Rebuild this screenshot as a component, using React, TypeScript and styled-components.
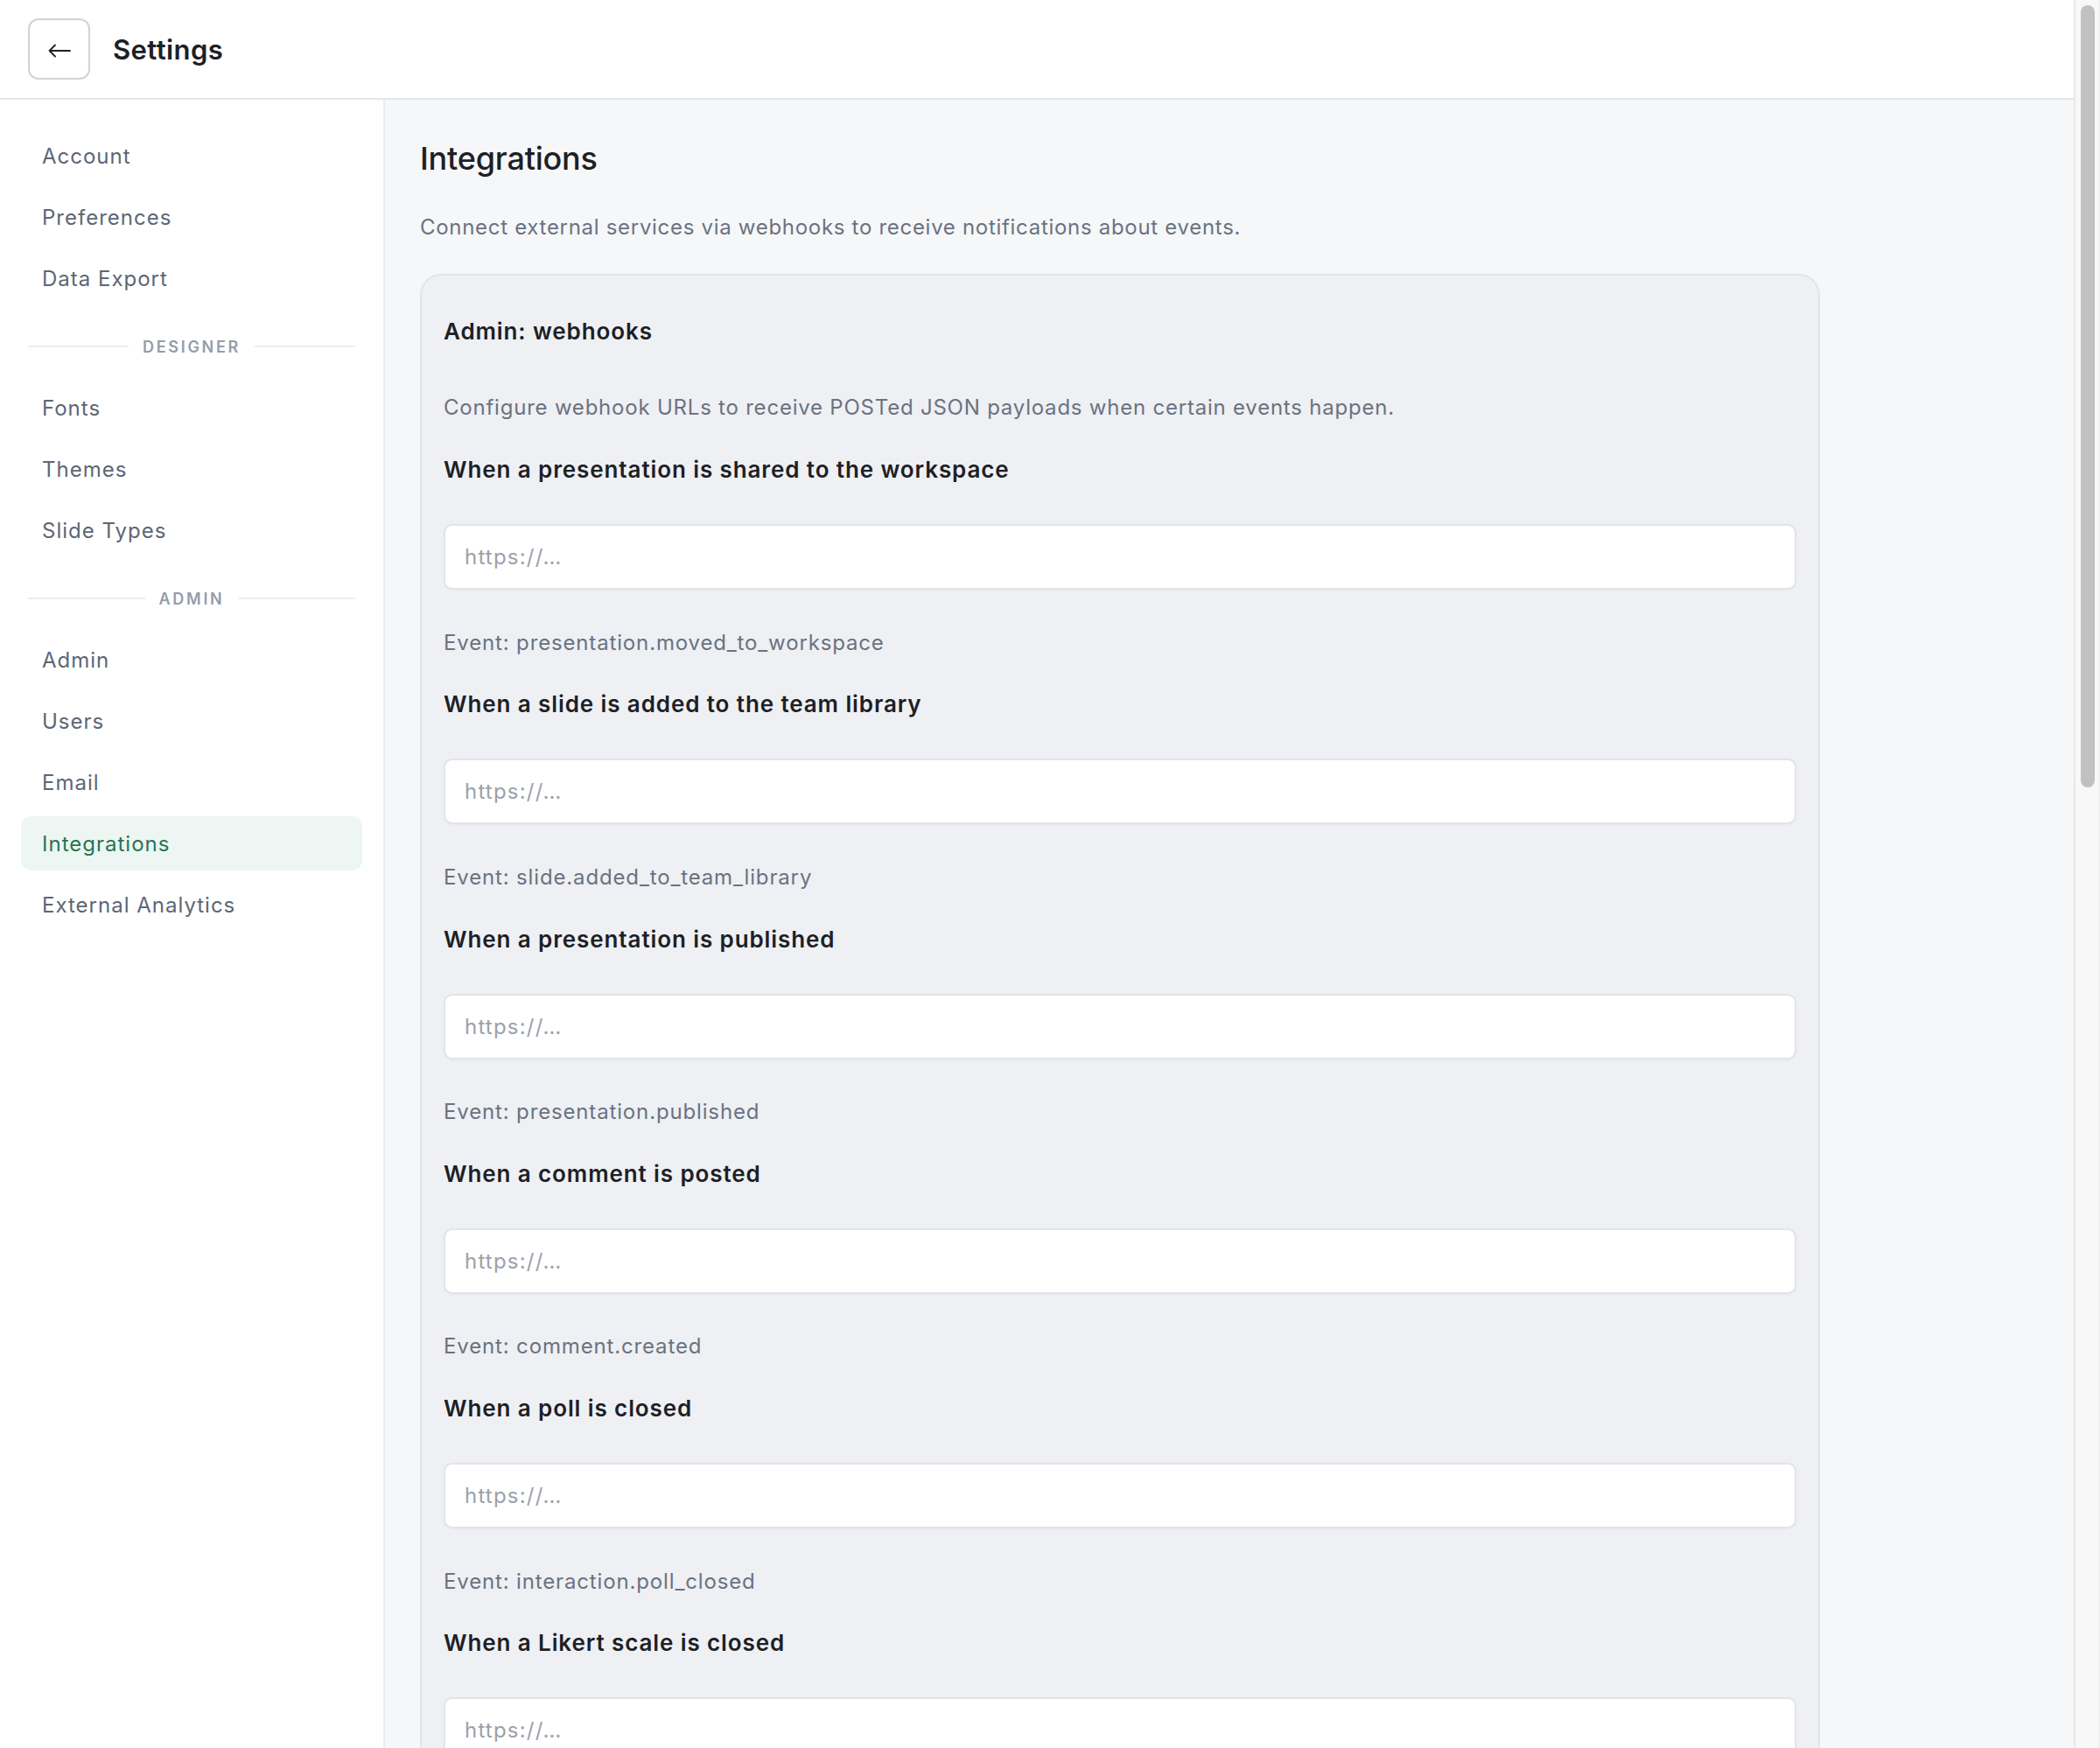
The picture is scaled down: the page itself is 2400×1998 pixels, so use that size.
import React from "react";
import styled, { createGlobalStyle } from "styled-components";

const GlobalStyle = createGlobalStyle`
  body {
    margin: 0;
    font-family: Inter, "Noto Sans", "Liberation Sans", sans-serif;
    background: #f6f7f9;
    color: #1d2025;
    -webkit-font-smoothing: antialiased;
  }
  * {
    box-sizing: border-box;
  }
`;

const Page = styled.div`
  display: flex;
  flex-direction: column;
  min-height: 100vh;
  margin-right: 30px;
`;

const ScrollRail = styled.div`
  position: fixed;
  top: 0;
  right: 0;
  width: 30px;
  height: 100vh;
  background: #f8f8f8;
  border-left: 2px solid #e8e8e8;
  border-right: 2px solid #efefef;
  padding: 6px 4px 0 6px;
`;

const ScrollThumb = styled.div`
  width: 16px;
  height: 894px;
  border-radius: 8px;
  background: #c1c1c1;
`;

const Header = styled.header`
  display: flex;
  align-items: center;
  gap: 26px;
  height: 114px;
  padding: 0 32px;
  background: #ffffff;
  border-bottom: 2px solid #e4e6eb;
`;

const BackButton = styled.button`
  display: flex;
  align-items: center;
  justify-content: center;
  width: 71px;
  height: 70px;
  padding: 4px 0 0;
  background: #ffffff;
  border: 2px solid #cfd3db;
  border-radius: 12px;
  color: #1d2025;
  cursor: pointer;
`;

const HeaderTitle = styled.h1`
  margin: 0;
  font-size: 31px;
  font-weight: 600;
  color: #1d2025;
  letter-spacing: 0.4px;
`;

const Body = styled.div`
  display: flex;
  flex: 1;
  align-items: stretch;
`;

const Sidebar = styled.nav`
  display: flex;
  flex-direction: column;
  gap: 8px;
  width: 440px;
  flex-shrink: 0;
  padding: 33px 24px;
  background: #ffffff;
  border-right: 2px solid #eaecf0;
`;

const NavItem = styled.a<{ $active?: boolean }>`
  display: flex;
  align-items: center;
  height: 62px;
  padding: 0 24px;
  border-radius: 12px;
  font-size: 24px;
  letter-spacing: 1px;
  color: ${(p) => (p.$active ? "#267552" : "#5d6675")};
  background: ${(p) => (p.$active ? "#edf6f2" : "transparent")};
  text-decoration: none;
  cursor: pointer;
`;

const SectionDivider = styled.div`
  display: flex;
  align-items: center;
  gap: 16px;
  margin: 28px 8px 20px;
  height: 22px;
  font-size: 18px;
  font-weight: 600;
  letter-spacing: 0.15em;
  color: #959cab;
  text-transform: uppercase;

  &::before,
  &::after {
    content: "";
    flex: 1;
    height: 2px;
    background: #eceef2;
  }
`;

const Main = styled.main`
  flex: 1;
  padding: 45px 40px 80px;
  background: #f6f7f9;
`;

const PageTitle = styled.h2`
  margin: 0;
  font-size: 36px;
  line-height: 44px;
  font-weight: 500;
  color: #1d2025;
  letter-spacing: -0.2px;
`;

const PageSubtitle = styled.p`
  margin: 40px 0 36px;
  font-size: 24px;
  line-height: 34px;
  letter-spacing: 0.7px;
  color: #6b7280;
`;

const Card = styled.section`
  max-width: 1600px;
  padding: 46px 25px 60px;
  background: #eef0f4;
  border: 2px solid #e2e4e9;
  border-radius: 24px;
`;

const CardTitle = styled.h3`
  margin: 0;
  font-size: 26px;
  line-height: 36px;
  font-weight: 600;
  letter-spacing: 0.9px;
  color: #1d2025;
`;

const CardDescription = styled.p`
  margin: 52px 0 36px;
  font-size: 24px;
  line-height: 34px;
  letter-spacing: 0.78px;
  color: #6b7280;
`;

const Hooks = styled.div`
  display: flex;
  flex-direction: column;
  gap: 35.8px;
`;

const Field = styled.div`
  display: flex;
  flex-direction: column;
`;

const FieldLabel = styled.label`
  margin: 0 0 44px;
  font-size: 26px;
  line-height: 36px;
  font-weight: 600;
  letter-spacing: 0.9px;
  color: #1d2025;
`;

const UrlInput = styled.input`
  width: 100%;
  height: 75px;
  padding: 0 22px;
  background: #ffffff;
  border: 2px solid #e2e4e9;
  border-radius: 10px;
  box-shadow: 0 1px 3px rgba(16, 24, 40, 0.04);
  font-family: Inter, "Noto Sans", sans-serif;
  font-size: 24px;
  letter-spacing: 1.2px;
  color: #1d2025;
  outline: none;

  &::placeholder {
    color: #9ba1ab;
  }
`;

const EventHint = styled.p`
  margin: 43.5px 0 0;
  font-size: 24px;
  line-height: 34px;
  letter-spacing: 0.85px;
  color: #6b7280;
`;

type NavEntry = { label: string; active?: boolean } | { section: string };

const nav: NavEntry[] = [
  { label: "Account" },
  { label: "Preferences" },
  { label: "Data Export" },
  { section: "Designer" },
  { label: "Fonts" },
  { label: "Themes" },
  { label: "Slide Types" },
  { section: "Admin" },
  { label: "Admin" },
  { label: "Users" },
  { label: "Email" },
  { label: "Integrations", active: true },
  { label: "External Analytics" },
];

const hooks = [
  { label: "When a presentation is shared to the workspace", event: "presentation.moved_to_workspace" },
  { label: "When a slide is added to the team library", event: "slide.added_to_team_library" },
  { label: "When a presentation is published", event: "presentation.published" },
  { label: "When a comment is posted", event: "comment.created" },
  { label: "When a poll is closed", event: "interaction.poll_closed" },
  { label: "When a Likert scale is closed", event: "interaction.likert_closed" },
  { label: "When a quiz is completed", event: "interaction.quiz_completed" },
  { label: "When a question is submitted", event: "interaction.question_submitted" },
  { label: "When a user joins the workspace", event: "user.joined_workspace" },
  { label: "When a user is removed from the workspace", event: "user.removed_from_workspace" },
  { label: "When a theme is updated", event: "theme.updated" },
  { label: "When a data export is ready", event: "export.completed" },
];

const BackArrow = () => (
  <svg width="26" height="16" viewBox="0 0 26 16" fill="none" aria-hidden="true">
    <path d="M25 8H1.5M8 1.5L1.5 8L8 14.5" stroke="#1d2025" strokeWidth="1.8" strokeLinecap="round" strokeLinejoin="round" />
  </svg>
);

export default function App() {
  return (
    <>
      <GlobalStyle />
      <Page>
        <Header>
          <BackButton aria-label="Back">
            <BackArrow />
          </BackButton>
          <HeaderTitle>Settings</HeaderTitle>
        </Header>
        <Body>
          <Sidebar>
            {nav.map((item, i) =>
              "section" in item ? (
                <SectionDivider key={i}>{item.section}</SectionDivider>
              ) : (
                <NavItem key={i} $active={item.active}>
                  {item.label}
                </NavItem>
              )
            )}
          </Sidebar>
          <Main>
            <PageTitle>Integrations</PageTitle>
            <PageSubtitle>
              Connect external services via webhooks to receive notifications about events.
            </PageSubtitle>
            <Card>
              <CardTitle>Admin: webhooks</CardTitle>
              <CardDescription>
                Configure webhook URLs to receive POSTed JSON payloads when certain events happen.
              </CardDescription>
              <Hooks>
                {hooks.map((h) => (
                  <Field key={h.event}>
                    <FieldLabel>{h.label}</FieldLabel>
                    <UrlInput type="url" placeholder="https://…" />
                    <EventHint>Event: {h.event}</EventHint>
                  </Field>
                ))}
              </Hooks>
            </Card>
          </Main>
        </Body>
      </Page>
      <ScrollRail aria-hidden="true">
        <ScrollThumb />
      </ScrollRail>
    </>
  );
}
